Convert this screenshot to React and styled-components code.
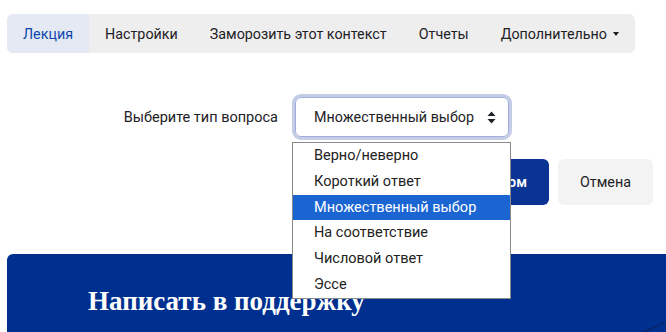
import React from 'react';
import styled, { createGlobalStyle } from 'styled-components';

const Global = createGlobalStyle`
  body {
    margin: 0;
    background: #fff;
    font-family: Roboto, "Noto Sans", sans-serif;
    color: #1d2125;
    overflow: hidden;
  }
`;

const Page = styled.div`
  padding: 14px 0 0 7px;
  width: 666px;
  height: 332px;
  box-sizing: border-box;
  overflow: hidden;
`;

const Tabs = styled.nav`
  display: inline-flex;
  align-items: stretch;
  background: #eeeeee;
  border-radius: 6px;
  height: 39px;
`;

const Tab = styled.a`
  display: flex;
  align-items: center;
  gap: 6px;
  padding: 0 16px;
  font-size: 14.3px;
  color: ${(p) => (p.$active ? '#0f47ad' : '#1d2125')};
  background: ${(p) => (p.$active ? '#e4e9f4' : 'transparent')};
  border-radius: ${(p) => (p.$active ? '6px 0 0 6px' : '0')};
  text-decoration: none;
  white-space: nowrap;
`;

const Caret = styled.span`
  width: 0;
  height: 0;
  border-left: 3.5px solid transparent;
  border-right: 3.5px solid transparent;
  border-top: 4px solid #1d2125;
  margin-top: 1px;
`;

const Form = styled.div`
  display: grid;
  grid-template-columns: 288px auto;
  row-gap: 22px;
  margin-top: 44px;
`;

const Label = styled.label`
  justify-self: end;
  align-self: center;
  padding-right: 17px;
  font-size: 14.5px;
`;

const SelectWrap = styled.div`
  position: relative;
  width: 214px;
`;

const Select = styled.div`
  box-sizing: border-box;
  height: 40px;
  border: 1px solid #9fadd8;
  border-radius: 6px;
  box-shadow: 0 0 0 3px #c5cde6;
  display: flex;
  align-items: center;
  justify-content: space-between;
  padding: 0 12px 0 18px;
  font-size: 14.3px;
`;

const Updown = styled.svg`
  width: 9px;
  height: 13px;
`;

const Popup = styled.ul`
  position: absolute;
  left: -3px;
  top: 45px;
  width: 219px;
  box-sizing: border-box;
  margin: 0;
  padding: 0;
  list-style: none;
  background: #fff;
  border: 1px solid #8a8a8a;
  z-index: 5;
`;

const Option = styled.li`
  line-height: 25.8px;
  padding-left: 21px;
  font-size: 14.5px;
  color: ${(p) => (p.$selected ? '#fff' : '#222')};
  background: ${(p) => (p.$selected ? '#1b65d3' : 'transparent')};
  white-space: nowrap;
`;

const Buttons = styled.div`
  grid-column: 2;
  display: flex;
  gap: 9px;
`;

const Button = styled.button`
  height: 46px;
  border: none;
  border-radius: 6px;
  font-family: inherit;
  font-size: 14.3px;
  padding: 0 22px;
  white-space: nowrap;
  background: ${(p) => (p.$primary ? '#0a3494' : '#f3f3f3')};
  color: ${(p) => (p.$primary ? '#fff' : '#1d2125')};
  font-weight: ${(p) => (p.$primary ? 600 : 400)};
`;

const PrimaryButton = styled(Button)`
  width: 254px;
  overflow: hidden;
  text-align: right;
`;

const Support = styled.section`
  position: relative;
  margin-top: 49px;
  height: 120px;
  background: #00308f;
  border-radius: 6px 0 0 0;
  padding: 32px 0 0 81px;
  overflow: hidden;
`;

const SupportTitle = styled.h2`
  margin: 0;
  font-family: "Liberation Serif", "DejaVu Serif", serif;
  font-weight: 700;
  font-size: 27px;
  color: #fff;
`;

const Stroke = styled.svg`
  position: absolute;
  right: 0;
  top: 50px;
  width: 50px;
  height: 40px;
`;

const options = [
  'Верно/неверно',
  'Короткий ответ',
  'Множественный выбор',
  'На соответствие',
  'Числовой ответ',
  'Эссе',
];

export default function App() {
  return (
    <Page>
      <Global />
      <Tabs>
        <Tab $active>Лекция</Tab>
        <Tab>Настройки</Tab>
        <Tab>Заморозить этот контекст</Tab>
        <Tab>Отчеты</Tab>
        <Tab>
          Дополнительно <Caret />
        </Tab>
      </Tabs>

      <Form>
        <Label>Выберите тип вопроса</Label>
        <SelectWrap>
          <Select>
            <span>Множественный выбор</span>
            <Updown viewBox="0 0 9 13">
              <path d="M4.5 0.5 L8.5 5 H0.5 Z M4.5 12.5 L8.5 8 H0.5 Z" fill="#1d2125" />
            </Updown>
          </Select>
          <Popup>
            {options.map((o) => (
              <Option key={o} $selected={o === 'Множественный выбор'}>
                {o}
              </Option>
            ))}
          </Popup>
        </SelectWrap>
        <Buttons>
          <PrimaryButton $primary>Добавить вопросом</PrimaryButton>
          <Button>Отмена</Button>
        </Buttons>
      </Form>

      <Support>
        <SupportTitle>Написать в поддержку</SupportTitle>
        <Stroke viewBox="0 0 50 40">
          <path d="M0 40 L50 18" stroke="#0a2460" strokeWidth="1.2" fill="none" />
        </Stroke>
      </Support>
    </Page>
  );
}
